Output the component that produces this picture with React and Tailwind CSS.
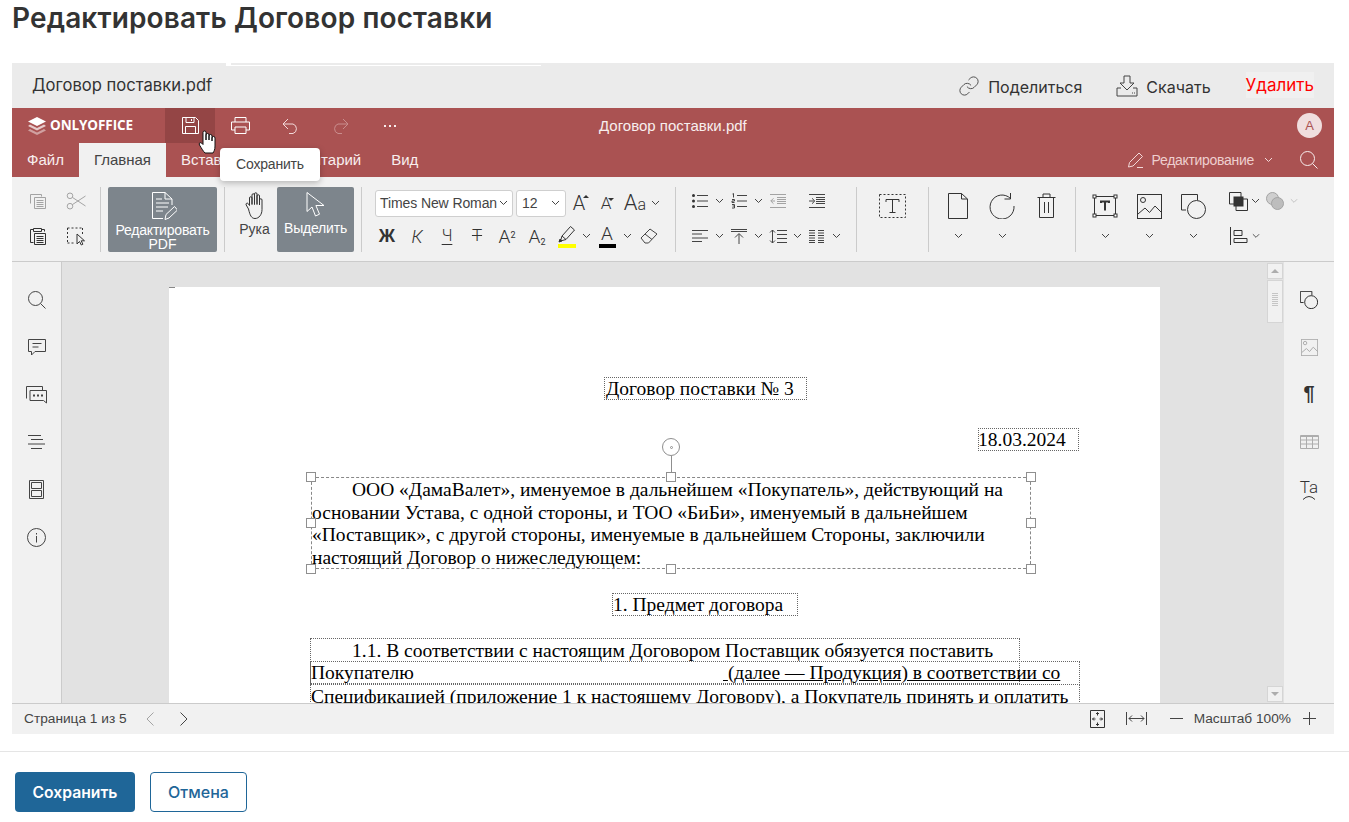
import React from 'react';
import { Link } from 'lucide-react';

const Sv = ({ w, h, c = '#444', f = 'none', sw = 1, children, className = '' }) => (
  <svg width={w} height={h} viewBox={`0 0 ${w} ${h}`} fill={f} stroke={c} strokeWidth={sw} className={className}>{children}</svg>
);
const Chev = ({ c = '#444' }) => <Sv w={9} h={6} c={c}><path d="M1 1l3.5 3.5L8 1" /></Sv>;
const Box = ({ className = '', children }) => <div className={`flex items-center justify-center shrink-0 ${className}`}>{children}</div>;
const Sep = ({ className = '' }) => <div className={`w-px h-[65px] bg-[#cbcbcb] shrink-0 ${className}`} />;

const CopyI = () => <Sv w={18} h={16} c="#a3a3a3"><path d="M1.5 10.5v-9h11v2M5.5 4.5h11v11h-11zM7.5 7.5h7M7.5 9.5h7M7.5 11.5h7M7.5 13.5h7" /></Sv>;
const Scissors = () => <Sv w={20} h={18} c="#a3a3a3"><circle cx="4" cy="3.8" r="2.8" /><circle cx="4" cy="14.2" r="2.8" /><path d="M6.4 5.4L19.5 14M6.4 12.6L19.5 4" /></Sv>;
const Paste = () => <Sv w={18} h={18} c="#333"><path d="M4.5 15.5h-3v-13h3M12.5 2.5h3v2M4.5 1.5h8v3h-8zM5.5 6.5h11v11h-11zM7.5 9.5h7M7.5 11.5h7M7.5 13.5h7M7.5 15.5h7" /></Sv>;
const SelAll = () => <Sv w={20} h={20} c="#333"><path d="M1.5 2h15M1.5 2v15M1.5 17h8M16.5 2v6" strokeDasharray="2 2" /><path d="M11 8v10l2.5-2.5 1.8 3.5 1.6-.8-1.7-3.4h3.3z" fill="#f1f1f1" /></Sv>;
const EditPdf = () => (
  <Sv w={28} h={30} c="#fff">
    <path d="M16 1.5H3.5v26H14M16 1.5l7 6.5v6M16 1.5V8h7M7 8h6M7 12h13M7 16h12M7 20h7" />
    <path d="M16 28.5l1-5 8.5-8 3 3.5-8.5 8z" />
  </Sv>
);
const Cursor = () => <Sv w={22} h={27} c="#fff"><path d="M2 1.5v19l5-4.5 3.5 9 4-1.8-3.6-8.7H19z" /></Sv>;
const HandI = () => (
  <Sv w={20} h={27} c="#333">
    <path d="M3.5 17L1.2 13c-.9-1.400 1-2.600 2-1.400L4.500 13.500V6a1.250 1.250 0 0 1 2.500 0v6.500V3a1.250 1.250 0 0 1 2.500 0v9.500V2a1.250 1.250 0 0 1 2.500 0v10.500V4a1.250 1.250 0 0 1 2.500 0v9V8a1.250 1.250 0 0 1 2.500 0v9.500c0 5-3 9-7 9H10c-3.500 0-5-3-6.500-9.500z" />
  </Sv>
);
const Bullets = () => <Sv w={16} h={14}><path d="M5 1.5h11M5 7h11M5 12.5h11" /><g fill="#333" stroke="none"><circle cx="1.5" cy="1.5" r="1.5" /><circle cx="1.5" cy="7" r="1.5" /><circle cx="1.5" cy="12.5" r="1.5" /></g></Sv>;
const Numbers = () => <Sv w={16} h={16}><path d="M6 2.5h10M6 8h10M6 13.5h10M1.5 1l1-.5v4M1 6.500h2.500v1.500H1v1.500h2.500M1 11.500h2.500v1.500H1.500M3.500 13v2H1" /></Sv>;
const Outdent = ({ c = '#a3a3a3' }) => <Sv w={16} h={14} c={c}><path d="M0 .5h16M7 3.500h9M7 5.500h9M7 7.500h9M7 9.500h9M0 13.500h16M5 7H.8M3.500 4.300L.8 7l2.700 2.700" /></Sv>;
const Indent = () => <Sv w={16} h={14}><path d="M0 .5h16M7 3.500h9M7 5.500h9M7 7.500h9M7 9.500h9M0 13.500h16M0 7h5M3 4.300L5.800 7 3 9.700" /></Sv>;
const AlignL = () => <Sv w={16} h={12}><path d="M0 .5h16M0 4h10M0 8h16M0 11.500h10" /></Sv>;
const VAlign = () => <Sv w={16} h={15}><path d="M0 .5h16M0 2.500h16M8 15V5M4 8.500L8 4.500l4 4" /></Sv>;
const LineSp = () => <Sv w={18} h={15}><path d="M8 1.500h10M8 5.500h10M8 9.500h10M8 13.500h10M3.500 1v13M1 3.500L3.500 1 6 3.500M1 11.500L3.500 14 6 11.500" /></Sv>;
const Cols = () => <Sv w={15} h={13}><path d="M0 .5h6M9 .5h6M0 3h6M9 3h6M0 5.500h6M9 5.500h6M0 8h6M9 8h6M0 10.500h6M9 10.500h6M0 12.500h6M9 12.500h6" /></Sv>;
const TextBoxI = () => <Sv w={27} h={24} c="#333"><rect x=".5" y=".5" width="26" height="23" strokeDasharray="2 2" /><path d="M7 8V5.500h13V8M13.500 5.500V19M10.500 18.500h6" /></Sv>;
const DocI = () => <Sv w={20} h={26} c="#333"><path d="M.5 25.500V.5h13l6 5.500v19.500zM13.500.5V6h6" /></Sv>;
const Rotate = () => <Sv w={26} h={26} c="#333"><path d="M21.500 5.500A12 12 0 1 0 25 13M21.500 0v6H15.500" /></Sv>;
const Trash = () => <Sv w={19} h={26} c="#333"><path d="M.5 4.500h18M6 4.500V1h7v3.500M2.500 4.500V24.500h14V4.500M7.500 9v11M11.500 9v11" /></Sv>;
const TBox = () => <Sv w={26} h={24} c="#333"><rect x="2.500" y="2.500" width="21" height="19" /><g fill="#fff"><rect x="1" y="1" width="3" height="3" /><rect x="22" y="1" width="3" height="3" /><rect x="1" y="20" width="3" height="3" /><rect x="22" y="20" width="3" height="3" /></g><path d="M9 9V7.500h8V9M13 7.500v9" strokeWidth="2" /></Sv>;
const ImgI = ({ s = 25, c = '#333' }) => <svg width={s} height={s} viewBox="0 0 25 25" fill="none" stroke={c} strokeWidth={25 / s}><rect x=".5" y=".5" width="24" height="24" /><circle cx="6" cy="6" r="2.500" /><path d="M1 20l7-6 4.500 4.500L18 12l7 7" /></svg>;
const Shapes = ({ s = 25, c = '#333' }) => <svg width={s} height={s} viewBox="0 0 25 25" fill="none" stroke={c} strokeWidth={25 / s}><path d="M5 16H.5V.5h16V6" /><circle cx="15.500" cy="15.500" r="9" /></svg>;
const Arrange = () => <Sv w={19} h={19} c="#333"><path d="M5 12H.5V.5H12V5M7 13.500v5h11.500V7H14" /><rect x="5" y="5" width="9" height="9" fill="#333" /></Sv>;
const Combine = () => <Sv w={18} h={18} c="#a3a3a3"><circle cx="6.500" cy="6.500" r="6" fill="#cfcfcf" /><circle cx="11.500" cy="11.500" r="6" fill="#bdbdbd" /></Sv>;
const AlignObj = () => <Sv w={18} h={18} c="#333"><path d="M.5 0v18M4 3.500h8v5H4zM4 11.500h13v4H4z" /></Sv>;
const Highlighter = () => <Sv w={18} h={18} c="#333"><path d="M4 11L12.500 1.500l4 3.500L8 14.500zM4 11l-1.500 5 5.500-1.500" /><path d="M1 17l3-1-2-2z" fill="#333" /></Sv>;
const Eraser = () => <Sv w={18} h={16}><path d="M1 10L10 1l7 5-8.500 9H5zM5 6l7 5.500" /></Sv>;
const AGlyph = ({ children, className = '' }) => <span className={`font-['Roboto',sans-serif] font-light text-[#333] leading-none ${className}`}>{children}</span>;

const Row = ({ className = '', children }) => <div className={`flex items-center h-[28px] ${className}`}>{children}</div>;

function TitleBar() {
  return (
    <div className="relative flex items-center h-[35px] bg-[#aa5252]">
      <div className="flex items-center w-[153px] pl-[15px] gap-[3px] shrink-0">
        <Sv w={20} h={19} c="none">
          <path d="M10 1L19 5.500 10 10 1 5.500z" fill="#fff" />
          <path d="M3 8.500L10 12l7-3.500 2 1.500-9 4.500L1 10z" fill="#fff" fillOpacity=".7" />
          <path d="M3 13L10 16.500 17 13l2 1.500L10 19 1 14.500z" fill="#fff" fillOpacity=".45" />
        </Sv>
        <span className="font-['Open_Sans',sans-serif] font-bold text-[13.500px] tracking-[-0.1px] text-white">ONLYOFFICE</span>
      </div>
      <Box className="w-[50px] h-[35px] bg-[#944545]"><Sv w={17} h={17} c="#fff"><path d="M.5.5h13l3 3v13H.5zM4 .5v5h8v-5M9.500 2v2M3.500 16.500v-7h10v7" /></Sv></Box>
      <Box className="w-[50px] h-[35px]"><Sv w={19} h={17} c="#fff"><path d="M4 5V.5h11V5M4 13H.5V5h18v8H15M4 10h11v6.500H4z" /></Sv></Box>
      <Box className="w-[50px] h-[35px]"><Sv w={17} h={16} c="#f2d9d9"><path d="M6 1L1 6l5 5M1 6h10a5 5 0 0 1 0 9.500H7" /></Sv></Box>
      <Box className="w-[50px] h-[35px]"><Sv w={17} h={16} c="#c98d8d"><path d="M11 1l5 5-5 5M16 6H6a5 5 0 0 0 0 9.500h4" /></Sv></Box>
      <Box className="w-[50px] h-[35px]"><Sv w={12} h={2} c="none"><g fill="#f8eeee"><rect x="0" y="0" width="2" height="2" /><rect x="5" y="0" width="2" height="2" /><rect x="10" y="0" width="2" height="2" /></g></Sv></Box>
      <span className="absolute left-[587px] top-[9px] text-[15px] leading-[17px] text-[#f8eeee]">Договор поставки.pdf</span>
      <div className="ml-auto mr-[12px] w-[25px] h-[25px] rounded-full bg-[#f0dede] flex items-center justify-center text-[#aa5252] text-[13px]">А</div>
    </div>
  );
}

function TabBar() {
  const Tab = ({ active, children }) => (
    <div className={`px-[15px] h-[34px] flex items-center text-[15px] ${active ? 'bg-[#f1f1f1] text-[#444]' : 'text-[#f8eeee]'}`}>{children}</div>
  );
  return (
    <div className="flex items-center h-[34px] bg-[#aa5252]">
      <Tab>Файл</Tab>
      <Tab active>Главная</Tab>
      <Tab>Вставка</Tab>
      <Tab>Комментарий</Tab>
      <Tab>Вид</Tab>
      <div className="ml-auto flex items-center">
        <Sv w={16} h={16} c="#f2d9d9"><path d="M.5 15l1-4.500L11 1l3.500 3.500-9.500 9.500-4.500 1zM9 15.500h6" /></Sv>
        <span className="ml-[8px] text-[14px] tracking-[-0.3px] text-[#eecfcf]">Редактирование</span>
        <span className="ml-[10px]"><Chev c="#f2d9d9" /></span>
        <Box className="ml-[26px] mr-[15px] w-[20px]"><Sv w={18} h={18} c="#f8eeee"><circle cx="7.500" cy="7.500" r="7" /><path d="M12.500 12.500L17.500 17.500" /></Sv></Box>
      </div>
    </div>
  );
}

function Toolbar() {
  return (
    <div className="flex items-start h-[85px] pt-[10px] bg-[#f1f1f1] border-b border-[#cbcbcb] text-[#444]">
      <div className="ml-[12px] grid grid-cols-[28px_28px] gap-x-[10px] gap-y-[7px] shrink-0">
        <Box className="h-[28px]"><CopyI /></Box>
        <Box className="h-[28px]"><Scissors /></Box>
        <Box className="h-[28px]"><Paste /></Box>
        <Box className="h-[28px]"><SelAll /></Box>
      </div>
      <Sep className="ml-[10px]" />
      <div className="ml-[7px] w-[109px] h-[65px] bg-[#7d858c] rounded-[2px] flex flex-col items-center pt-[4px] text-white text-[14px] leading-[14px] shrink-0">
        <EditPdf />
        <span className="mt-[2px] tracking-[-0.2px]">Редактировать</span>
        <span>PDF</span>
      </div>
      <Sep className="ml-[7px]" />
      <div className="ml-[7px] w-[45px] h-[65px] flex flex-col items-center pt-[5px] text-[14px] leading-[16px] shrink-0">
        <HandI />
        <span className="mt-[2px]">Рука</span>
      </div>
      <div className="w-[77px] h-[65px] bg-[#7d858c] rounded-[2px] flex flex-col items-center pt-[4px] text-white text-[14px] leading-[16px] shrink-0">
        <Cursor />
        <span className="mt-[2px] tracking-[-0.2px]">Выделить</span>
      </div>
      <Sep className="ml-[7px]" />

      <div className="ml-[13px] flex flex-col gap-[7px] w-[285px] shrink-0">
        <Row className="pt-[4px]">
          <div className="w-[138px] h-[27px] bg-white border border-[#cfcfcf] rounded-[3px] flex items-center pl-[4px] text-[14px] tracking-[-0.1px] whitespace-nowrap">Times New Roman<span className="ml-auto mr-[4px]"><Chev /></span></div>
          <div className="ml-[3px] w-[50px] h-[27px] bg-white border border-[#cfcfcf] rounded-[3px] flex items-center pl-[5px] text-[14px]">12<span className="ml-auto mr-[5px]"><Chev /></span></div>
          <Box className="w-[26px] relative"><AGlyph className="text-[20px]">A</AGlyph><span className="absolute right-[3px] top-[2px] w-0 h-0 border-x-[3px] border-b-[3px] border-x-transparent border-b-[#333]" /></Box>
          <Box className="w-[28px] relative"><AGlyph className="text-[17px]">A</AGlyph><span className="absolute right-[6px] top-[3px] w-0 h-0 border-x-[3px] border-t-[3px] border-x-transparent border-t-[#333]" /></Box>
          <Box className="w-[30px]"><AGlyph className="text-[22px]">A<span className="text-[16px]">a</span></AGlyph></Box>
          <Box className="w-[10px]"><Chev /></Box>
        </Row>
        <Row className="-ml-[3px]">
          <Box className="w-[30px]"><span className="font-['Liberation_Sans',sans-serif] font-bold text-[18px] text-[#333]">Ж</span></Box>
          <Box className="w-[30px]"><span className="italic font-['Roboto',sans-serif] font-light text-[18px] text-[#333]">К</span></Box>
          <Box className="w-[30px]"><span className="underline underline-offset-[3px] font-['Roboto',sans-serif] font-light text-[16px] text-[#333]">Ч</span></Box>
          <Box className="w-[30px]"><span className="line-through font-['Roboto',sans-serif] font-light text-[17px] text-[#333]">Т</span></Box>
          <Box className="w-[30px]"><AGlyph className="text-[19px]">A<sup className="text-[9px] font-normal">2</sup></AGlyph></Box>
          <Box className="w-[30px]"><AGlyph className="text-[19px]">A<sub className="text-[9px] font-normal">2</sub></AGlyph></Box>
          <Box className="w-[29px] flex-col"><Highlighter /><span className="block w-[18px] h-[4px] bg-[#ffff00] mt-[1px]" /></Box>
          <Box className="w-[10px]"><Chev /></Box>
          <Box className="w-[32px] flex-col"><AGlyph className="text-[19px] leading-[17px]">A</AGlyph><span className="block w-[17px] h-[4px] bg-black mt-[1px]" /></Box>
          <Box className="w-[9px]"><Chev /></Box>
          <Box className="w-[34px]"><Eraser /></Box>
        </Row>
      </div>
      <Sep className="ml-[15px]" />

      <div className="ml-[14px] flex flex-col gap-[7px] w-[155px] shrink-0">
        <Row>
          <Box className="w-[20px]"><Bullets /></Box><Box className="w-[18px]"><Chev /></Box>
          <Box className="w-[21px]"><Numbers /></Box><Box className="w-[18px]"><Chev /></Box>
          <Box className="w-[21px]"><Outdent /></Box><Box className="w-[18px]" />
          <Box className="w-[21px]"><Indent /></Box>
        </Row>
        <Row>
          <Box className="w-[20px]"><AlignL /></Box><Box className="w-[18px]"><Chev /></Box>
          <Box className="w-[21px]"><VAlign /></Box><Box className="w-[18px]"><Chev /></Box>
          <Box className="w-[21px]"><LineSp /></Box><Box className="w-[18px]"><Chev /></Box>
          <Box className="w-[21px]"><Cols /></Box><Box className="w-[18px]"><Chev /></Box>
        </Row>
      </div>
      <Sep className="ml-[11px]" />
      <Box className="w-[71px] h-[36px] pt-[2px]"><TextBoxI /></Box>
      <Sep />

      <div className="ml-[7px] flex shrink-0">
        {[<DocI key="a" />, <Rotate key="b" />, <Trash key="c" />].map((ic, i) => (
          <div key={i} className="w-[44px] flex flex-col items-center">
            <Box className="h-[38px]">{ic}</Box>
            <Box className="h-[8px] mt-[7px]">{i < 2 ? <Chev /> : null}</Box>
          </div>
        ))}
      </div>
      <Sep className="ml-[7px]" />
      <div className="ml-[7px] flex shrink-0">
        {[<TBox key="a" />, <ImgI key="b" />, <Shapes key="c" />].map((ic, i) => (
          <div key={i} className="w-[44px] flex flex-col items-center">
            <Box className="h-[38px]">{ic}</Box>
            <Box className="h-[8px] mt-[7px]"><Chev /></Box>
          </div>
        ))}
      </div>
      <div className="ml-[11px] flex flex-col gap-[7px] shrink-0">
        <Row>
          <Box className="w-[24px]"><Arrange /></Box><Box className="w-[10px]"><Chev /></Box>
          <Box className="w-[30px]"><Combine /></Box><Box className="w-[8px]"><Chev c="#bdbdbd" /></Box>
        </Row>
        <Row>
          <Box className="w-[26px]"><AlignObj /></Box><Box className="w-[8px]"><Chev /></Box>
        </Row>
      </div>
    </div>
  );
}

const Frame = ({ className = '', children }) => (
  <div className={`absolute border border-dotted border-[#666] whitespace-nowrap text-black ${className}`}>{children}</div>
);
const H = ({ className = '' }) => <span className={`absolute w-[10px] h-[10px] bg-white border border-[#8f8f8f] ${className}`} />;

function Page() {
  return (
    <div className="relative ml-[107px] mt-[25px] w-[991px] h-[800px] bg-white font-['Liberation_Serif',serif] text-[19.500px] leading-[22.600px]">
      <div className="absolute left-0 top-0 w-[6px] border-t border-dashed border-[#888]" />
      <Frame className="left-[435px] top-[90px] w-[203px] h-[23px] pl-[1px]">Договор поставки № 3</Frame>
      <Frame className="left-[809px] top-[141px] w-[101px] h-[23px] -indent-px">18.03.2024</Frame>

      <div className="absolute left-[493px] top-[151px] w-[18px] h-[18px] rounded-full border border-[#8f8f8f] flex items-center justify-center"><span className="w-[3px] h-[3px] rounded-full border border-[#8f8f8f]" /></div>
      <div className="absolute left-[502px] top-[169px] w-px h-[21px] bg-[#8f8f8f]" />
      <div className="absolute left-[142px] top-[190px] w-[720px] h-[92px] pt-px border border-dashed border-[#888] whitespace-nowrap text-black">
        <div className="pl-[40px]">ООО «ДамаВалет», именуемое в дальнейшем «Покупатель», действующий на</div>
        <div>основании Устава, с одной стороны, и ТОО «БиБи», именуемый в дальнейшем</div>
        <div>«Поставщик», с другой стороны, именуемые в дальнейшем Стороны, заключили</div>
        <div>настоящий Договор о нижеследующем:</div>
        <H className="-left-[6px] -top-[6px]" /><H className="left-[354px] -top-[6px]" /><H className="-right-[6px] -top-[6px]" />
        <H className="-left-[6px] top-[40px]" /><H className="-right-[6px] top-[40px]" />
        <H className="-left-[6px] -bottom-[6px]" /><H className="left-[354px] -bottom-[6px]" /><H className="-right-[6px] -bottom-[6px]" />
      </div>

      <Frame className="left-[443px] top-[306px] w-[186px] h-[23px]">1. Предмет договора</Frame>
      <Frame className="left-[141px] top-[351px] w-[710px] h-[46px] pl-[41px] pt-px">1.1. В соответствии с настоящим Договором Поставщик обязуется поставить</Frame>
      <Frame className="left-[141px] top-[374px] w-[770px] h-[24px]">Покупателю<span className="absolute left-[412px] top-0 underline">{'\u00a0'}(далее — Продукция) в соответствии со</span></Frame>
      <Frame className="left-[141px] top-[397px] w-[770px] h-[24px] pt-px">Спецификацией (приложение 1 к настоящему Договору), а Покупатель принять и оплатить</Frame>
    </div>
  );
}

function Main() {
  return (
    <div className="flex h-[441px]">
      <div className="w-[50px] shrink-0 bg-[#f1f1f1] border-r border-[#cbcbcb] flex flex-col items-center pt-[14px]">
        <Box className="h-[47.500px]"><Sv w={18} h={18}><circle cx="7.500" cy="7.500" r="7" /><path d="M12.500 12.500L17.500 17.500" /></Sv></Box>
        <Box className="h-[47.500px]"><Sv w={18} h={17}><path d="M.5.5h17v12H7l-3.500 3.500V12.500h-3zM4.500 4.500h9M4.500 8h6" /></Sv></Box>
        <Box className="h-[47.500px]"><Sv w={21} h={18}><path d="M.5 12.500V.5h16V4M4 4.500h16.500v12.500l-3-2.500H4z" /><path d="M7 9.500h2M11 9.500h2M15 9.500h2" strokeWidth="2" /></Sv></Box>
        <Box className="h-[47.500px]"><Sv w={17} h={14}><path d="M0 .5h13M3 4.500h12M0 9h17M3 13.500h11" /></Sv></Box>
        <Box className="h-[47.500px]"><Sv w={15} h={19}><path d="M.5.5h14v18H.5zM2.500 2.500h10v6h-10zM2.500 10.500h10v6h-10z" /></Sv></Box>
        <Box className="h-[47.500px]"><Sv w={19} h={19}><circle cx="9.500" cy="9.500" r="9" /><path d="M9.500 8v6.500M9.500 5v1.500" /></Sv></Box>
      </div>
      <div className="relative flex-1 min-w-0 bg-[#e2e2e2] overflow-hidden">
        <Page />
        <div className="absolute right-[1px] top-[1px] bottom-[1px] w-[16px] flex flex-col">
          <Box className="w-[16px] h-[16px] bg-[#f1f1f1] border border-[#d5d5d5]"><span className="w-0 h-0 border-x-[4px] border-b-[4px] border-x-transparent border-b-[#adadad]" /></Box>
          <div className="mt-px w-[16px] h-[43px] bg-[#f1f1f1] border border-[#d5d5d5] flex flex-col items-center pt-[12px] gap-px">
            {[0, 1, 2, 3, 4, 5, 6].map((i) => <span key={i} className="block w-[6px] h-px bg-[#c5c5c5]" />)}
          </div>
          <Box className="mt-auto w-[16px] h-[16px] bg-[#f1f1f1] border border-[#d5d5d5]"><span className="w-0 h-0 border-x-[4px] border-t-[4px] border-x-transparent border-t-[#adadad]" /></Box>
        </div>
      </div>
      <div className="w-[50px] shrink-0 bg-[#f1f1f1] flex flex-col items-center pt-[14px]">
        <Box className="h-[47.500px]"><Shapes s={18} c="#333" /></Box>
        <Box className="h-[47.500px]"><ImgI s={17} c="#adadad" /></Box>
        <Box className="h-[47.500px] pb-[4px]"><span className="font-['Liberation_Sans',sans-serif] font-bold text-[20px] text-[#333]">¶</span></Box>
        <Box className="h-[47.500px]"><Sv w={19} h={14} c="#adadad"><path d="M.5.500h18v13H.5zM.5 1.500h18M.5 5h18M.5 9h18M6.500 1v12M12.500 1v12" /></Sv></Box>
        <Box className="h-[47.500px] flex-col"><span className="font-['Roboto',sans-serif] font-light text-[17px] leading-[16px] text-[#333]">Ta</span><Sv w={14} h={5} c="#333"><path d="M1 4.500q6-6 12 0" /></Sv></Box>
      </div>
    </div>
  );
}

function StatusBar() {
  return (
    <div className="flex items-center h-[31px] bg-[#f1f1f1] border-t border-[#cbcbcb] text-[#444] text-[13.700px]">
      <span className="ml-[12px] w-[103px] whitespace-nowrap pt-px">Страница 1 из 5</span>
      <Box className="ml-[14px] w-[18px]"><Sv w={8} h={14} c="#a3a3a3"><path d="M7.500.5L1 7l6.500 6.500" /></Sv></Box>
      <Box className="ml-[16px] w-[18px]"><Sv w={8} h={14}><path d="M.5.5L7 7l-6.500 6.500" /></Sv></Box>
      <div className="ml-auto flex items-center">
        <Sv w={15} h={18} c="#333"><path d="M.5.5h14v17H.5zM7.500 2.500v3M6 4l1.500-1.500L9 4M7.500 15.500v-3M6 14l1.500 1.500L9 14M2.500 9h3M4 7.500L2.500 9 4 10.500M12.500 9h-3M11 7.500L12.500 9 11 10.500" /></Sv>
        <span className="ml-[21px]"><Sv w={21} h={13}><path d="M.5 0v13M20.500 0v13M3 6.500h15M6 3.500l-3 3 3 3M15 3.500l3 3-3 3" /></Sv></span>
        <span className="ml-[23px]"><Sv w={13} h={3}><path d="M0 1.500h13" /></Sv></span>
        <span className="ml-[11px] whitespace-nowrap pt-px">Масштаб 100%</span>
        <span className="ml-[12px] mr-[18px]"><Sv w={13} h={13}><path d="M0 6.500h13M6.500 0v13" /></Sv></span>
      </div>
    </div>
  );
}

export default function App() {
  return (
    <div className="relative w-[1349px] h-[822px] overflow-hidden bg-white font-['Liberation_Sans',sans-serif]">
      <h1 className="h-[63px] pl-[12px] font-['Inter',sans-serif] font-semibold text-[28px] leading-[36px] tracking-[0.13px] text-[#333]">Редактировать Договор поставки</h1>
      <div className="absolute left-[226px] top-[63px] w-[5px] h-[3px] bg-white" />
      <div className="absolute left-[231px] top-[65px] w-[310px] h-px bg-white" />
      <div className="mx-[12px] w-[1322px]">
        <div className="flex items-center h-[45px] bg-[#ebebeb] font-['Inter',sans-serif] text-[16px] text-[#333]">
          <span className="ml-[20px] -mt-[1px] text-[16.600px]">Договор поставки.pdf</span>
          <div className="ml-auto flex items-center">
            <Link size={22} strokeWidth={1} color="#444" />
            <span className="ml-[8px] mt-[3px]">Поделиться</span>
            <span className="ml-[34px]"><Sv w={22} h={22}><path d="M8 1h6v7h4l-7 7-7-7h4zM5 13H1v8h20v-8h-4M16 18h1M18 18h1" /></Sv></span>
            <span className="ml-[8px] mt-[3px]">Скачать</span>
            <span className="ml-[35px] mr-[20px] text-[17px] text-[#ff0000] bg-[#f0f0f0] h-[26px] leading-[26px] -mt-[1px]">Удалить</span>
          </div>
        </div>
        <TitleBar />
        <TabBar />
        <Toolbar />
        <Main />
        <StatusBar />
      </div>
      <div className="mt-[17px] border-t border-[#e5e5e5]" />
      <div className="mt-[20px] ml-[15px] flex gap-[15px] font-['Inter',sans-serif] text-[16px]">
        <button className="w-[120px] h-[40px] pt-px rounded-[4px] bg-[#1f6698] text-white font-semibold text-[15.700px]">Сохранить</button>
        <button className="w-[97px] h-[40px] rounded-[4px] bg-white border border-[#1f6698] text-[#1f6698] font-medium">Отмена</button>
      </div>

      <div className="absolute left-[220px] top-[148px] w-[100px] h-[33px] rounded-[4px] bg-white shadow-[0_2px_6px_rgba(0,0,0,0.25)] flex items-center justify-center text-[14px] tracking-[-0.2px] text-[#444]">Сохранить</div>
      <div className="absolute left-[198px] top-[130px]">
        <svg width="20" height="26" viewBox="0 0 20 26" fill="#fff" stroke="#111" strokeWidth="1">
          <path d="M5 2.500a1.500 1.500 0 0 1 3 0V10V5a1.500 1.500 0 0 1 3 0v5V6a1.500 1.500 0 0 1 3 0v5V8a1.500 1.500 0 0 1 3 0v8c0 4-1 5-2 7H7c-2-2-3-4-5.500-8-1-1.500.5-3 2-2l1.500 1.500z" />
        </svg>
      </div>
    </div>
  );
}
